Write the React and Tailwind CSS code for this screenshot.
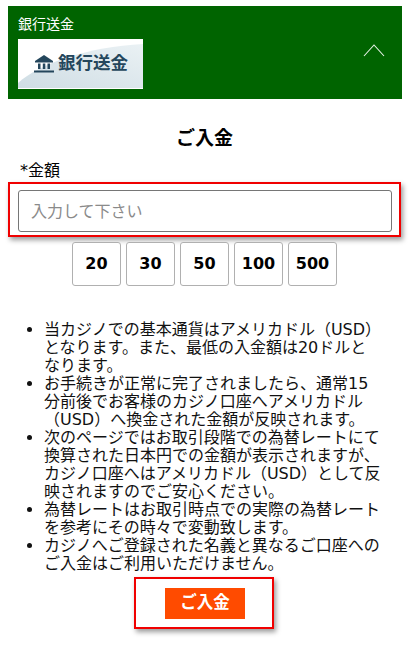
const amounts = ["20", "30", "50", "100", "500"];

const notes = [
  "当カジノでの基本通貨はアメリカドル（USD）となります。また、最低の入金額は20ドルとなります。",
  "お手続きが正常に完了されましたら、通常15分前後でお客様のカジノ口座へアメリカドル（USD）へ換金された金額が反映されます。",
  "次のページではお取引段階での為替レートにて換算された日本円での金額が表示されますが、カジノ口座へはアメリカドル（USD）として反映されますのでご安心ください。",
  "為替レートはお取引時点での実際の為替レートを参考にその時々で変動致します。",
  "カジノへご登録された名義と異なるご口座へのご入金はご利用いただけません。",
];

const font = { fontFamily: '"DejaVu Sans", "Noto Sans CJK JP", sans-serif' };

const BankLogo = () => (
  <div className="relative flex h-[50px] w-[125px] items-center overflow-hidden bg-white pl-[16px]">
    <svg className="absolute inset-0" width="125" height="50" viewBox="0 0 125 50">
      <defs>
        <linearGradient id="swoosh" x1="0" y1="1" x2="1" y2="0">
          <stop offset="0" stopColor="#cfdde4" />
          <stop offset="1" stopColor="#eaf1f4" />
        </linearGradient>
      </defs>
      <path d="M0 49 L0 44 C22 24 70 8 125 5 L125 49 Z" fill="url(#swoosh)" />
    </svg>
    <svg className="relative mr-[4px]" width="20" height="18" viewBox="0 0 20 18" fill="#24465c">
      <path d="M10 0 L19 6 L19 7.5 L1 7.5 L1 6 Z" />
      <rect x="4" y="8.5" width="2.5" height="5.5" />
      <rect x="8.8" y="8.5" width="2.5" height="5.5" />
      <rect x="13.5" y="8.5" width="2.5" height="5.5" />
      <rect x="0" y="15.5" width="20" height="2" />
    </svg>
    <span className="relative text-[17.5px] leading-none font-bold text-[#24465c]">銀行送金</span>
  </div>
);

export default function App() {
  return (
    <div className="h-[652px] overflow-hidden bg-white pt-[6px] pr-[7px] pl-[8px] text-black" style={font}>
      {/* payment method header */}
      <div className="flex h-[93px] items-center justify-between bg-[#006400] pr-[16px] pl-[10px]">
        <div className="mb-[2px]">
          <p className="mb-[5px] text-[14px] leading-[20px] text-white">銀行送金</p>
          <BankLogo />
        </div>
        <svg className="mb-[5px]" width="24" height="14" viewBox="0 0 24 14" fill="none" stroke="#e8f2e8" strokeWidth="1.1">
          <path d="M2 13 L12 2 L22 13" />
        </svg>
      </div>

      <h2 className="mt-[27px] pr-[1px] text-center text-[19px] leading-[24px] font-bold">ご入金</h2>
      <p className="mt-[11px] pl-[12px] text-[16px] leading-[20px]">*金額</p>

      <div className="mt-[1px] mr-[1px] border-2 border-[#f00000] pt-[6px] pr-[7px] pb-[3px] pl-[8px] shadow-[2px_3px_5px_rgba(0,0,0,0.4)]">
        <input
          placeholder="入力して下さい"
          className="block h-[42px] w-full rounded-[3px] border border-[#767676] px-[12px] text-[16px] placeholder:text-[#8a8a8a]"
        />
      </div>

      <div className="mt-[5px] ml-[64px] flex gap-[5px]">
        {amounts.map((amount) => (
          <button
            key={amount}
            className="h-[44px] w-[49px] rounded-[3px] border border-[#b0b0b0] bg-white text-[16px] font-bold"
          >
            {amount}
          </button>
        ))}
      </div>

      <ul className="mt-[35px] list-disc pr-[21px] pl-[36px] text-[16px] leading-[18px] text-[#111]">
        {notes.map((note) => (
          <li key={note}>{note}</li>
        ))}
      </ul>

      <div className="mt-[4px] ml-[126px] flex h-[52px] w-[140px] items-center justify-center border-2 border-[#f00000] pl-[2px] shadow-[2px_3px_5px_rgba(0,0,0,0.4)]">
        <button className="h-[31px] w-[80px] bg-[#ff4b00] text-[16.5px] font-bold text-white">ご入金</button>
      </div>
    </div>
  );
}
